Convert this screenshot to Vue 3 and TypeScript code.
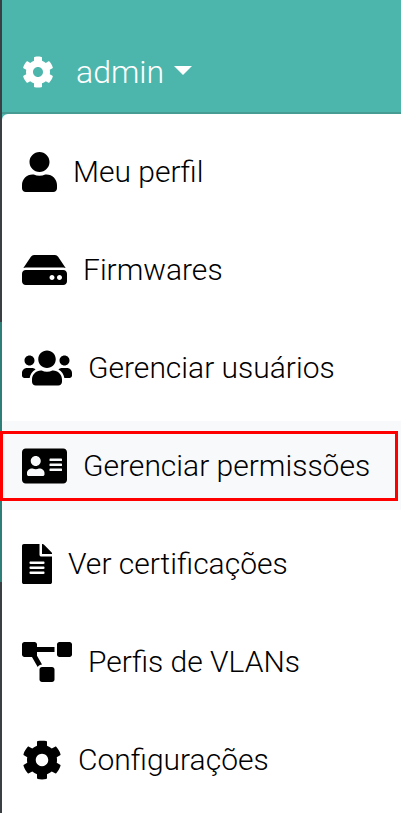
<template>
  <div class="page">
    <div class="edge">
      <span class="edge-dark edge-top"></span>
      <span class="edge-teal"></span>
      <span class="edge-dark edge-bottom"></span>
    </div>
    <div class="panel">
      <header class="navbar">
        <svg class="nav-gear" viewBox="0 0 512 512"><path :d="cogPath" /></svg>
        <span class="nav-user">admin</span>
        <span class="caret"></span>
      </header>
      <ul class="menu">
        <li
          v-for="item in items"
          :key="item.label"
          class="menu-item"
          :class="{ active: item.active }"
        >
          <svg class="menu-icon" :viewBox="item.box" :style="{ width: item.width + 'px' }"><path :d="item.path" /></svg>
          <span>{{ item.label }}</span>
          <i v-if="item.active" class="mark"></i>
        </li>
      </ul>
    </div>
  </div>
</template>

<script setup lang="ts">
  const cogPath =
    'M487.4 315.7l-42.6-24.6c4.3-23.2 4.3-47 0-70.2l42.6-24.6c4.9-2.8 7.1-8.6 5.5-14-11.1-35.6-30-67.8-54.7-94.6-3.8-4.1-10-5.1-14.8-2.3L380.8 110c-17.9-15.4-38.5-27.3-60.8-35.1V25.8c0-5.6-3.9-10.5-9.4-11.7-36.7-8.2-74.3-7.8-109.2 0-5.5 1.2-9.4 6.1-9.4 11.7V75c-22.2 7.9-42.8 19.8-60.8 35.1L88.7 85.5c-4.9-2.8-11-1.9-14.8 2.3-24.7 26.7-43.6 58.9-54.7 94.6-1.7 5.4.6 11.2 5.5 14L67.3 221c-4.3 23.2-4.3 47 0 70.2l-42.6 24.6c-4.9 2.8-7.1 8.6-5.5 14 11.1 35.6 30 67.8 54.7 94.6 3.8 4.1 10 5.1 14.8 2.3l42.6-24.6c17.9 15.4 38.5 27.3 60.8 35.1v49.2c0 5.6 3.9 10.5 9.4 11.7 36.7 8.2 74.3 7.8 109.2 0 5.5-1.2 9.4-6.1 9.4-11.7v-49.2c22.2-7.9 42.8-19.8 60.8-35.1l42.6 24.6c4.9 2.8 11 1.9 14.8-2.3 24.7-26.7 43.6-58.9 54.7-94.6 1.5-5.5-.7-11.3-5.6-14.1zM256 336c-44.1 0-80-35.9-80-80s35.9-80 80-80 80 35.9 80 80-35.9 80-80 80z'

  const items = [
    {
      label: 'Meu perfil',
      box: '0 0 448 512',
      width: 35,
      path: 'M224 256c70.7 0 128-57.3 128-128S294.7 0 224 0 96 57.3 96 128s57.3 128 128 128zm89.6 32h-16.7c-22.2 10.2-46.9 16-72.9 16s-50.6-5.8-72.9-16h-16.7C60.2 288 0 348.2 0 422.4V464c0 26.5 21.5 48 48 48h352c26.5 0 48-21.5 48-48v-41.6c0-74.2-60.2-134.4-134.4-134.4z',
    },
    {
      label: 'Firmwares',
      box: '0 0 576 512',
      width: 45,
      path: 'M576 304v96c0 26.51-21.49 48-48 48H48c-26.51 0-48-21.49-48-48v-96c0-26.51 21.49-48 48-48h480c26.51 0 48 21.49 48 48zm-48-80a79.557 79.557 0 0 1 30.777 6.165L462.25 85.374A48.003 48.003 0 0 0 422.311 64H153.689a48 48 0 0 0-39.938 21.374L17.223 230.165A79.557 79.557 0 0 1 48 224h480zm-48 96c-17.673 0-32 14.327-32 32s14.327 32 32 32 32-14.327 32-32-14.327-32-32-32zm-96 0c-17.673 0-32 14.327-32 32s14.327 32 32 32 32-14.327 32-32-14.327-32-32-32z',
    },
    {
      label: 'Gerenciar usuários',
      box: '0 0 640 512',
      width: 50,
      path: 'M96 224c35.3 0 64-28.7 64-64s-28.7-64-64-64-64 28.7-64 64 28.7 64 64 64zm448 0c35.3 0 64-28.7 64-64s-28.7-64-64-64-64 28.7-64 64 28.7 64 64 64zm32 32h-64c-17.6 0-33.5 7.1-45.1 18.6 40.3 22.1 68.9 62 75.1 109.4h66c17.7 0 32-14.3 32-32v-32c0-35.3-28.7-64-64-64zm-256 0c61.9 0 112-50.1 112-112S381.9 32 320 32 208 82.1 208 144s50.1 112 112 112zm76.8 32h-8.3c-20.8 10-43.9 16-68.5 16s-47.6-6-68.5-16h-8.3C179.6 288 128 339.6 128 403.2V432c0 26.5 21.5 48 48 48h288c26.5 0 48-21.5 48-48v-28.8c0-63.6-51.6-115.2-115.2-115.2zm-223.7-13.4C161.5 263.1 145.6 256 128 256H64c-35.3 0-64 28.7-64 64v32c0 17.7 14.3 32 32 32h65.9c6.3-47.4 34.9-87.3 75.2-109.4z',
    },
    {
      label: 'Gerenciar permissões',
      box: '0 0 576 512',
      width: 45,
      active: true,
      path: 'M528 32H48C21.5 32 0 53.5 0 80v352c0 26.5 21.5 48 48 48h480c26.5 0 48-21.5 48-48V80c0-26.5-21.5-48-48-48zm-352 96c35.3 0 64 28.7 64 64s-28.7 64-64 64-64-28.7-64-64 28.7-64 64-64zm112 236.8c0 10.6-10 19.2-22.4 19.2H86.4C74 384 64 375.4 64 364.8v-19.2c0-31.8 30.1-57.6 67.2-57.6h5c12.3 5.1 25.7 8 39.8 8s27.6-2.9 39.8-8h5c37.1 0 67.2 25.8 67.2 57.6v19.2zM512 312c0 4.4-3.6 8-8 8H360c-4.4 0-8-3.6-8-8v-16c0-4.4 3.6-8 8-8h144c4.4 0 8 3.6 8 8v16zm0-64c0 4.4-3.6 8-8 8H360c-4.4 0-8-3.6-8-8v-16c0-4.4 3.6-8 8-8h144c4.4 0 8 3.6 8 8v16zm0-64c0 4.4-3.6 8-8 8H360c-4.4 0-8-3.6-8-8v-16c0-4.4 3.6-8 8-8h144c4.4 0 8 3.6 8 8v16z',
    },
    {
      label: 'Ver certificações',
      box: '0 0 384 512',
      width: 30,
      path: 'M224 136V0H24C10.7 0 0 10.7 0 24v464c0 13.3 10.7 24 24 24h336c13.3 0 24-10.7 24-24V160H248c-13.2 0-24-10.8-24-24zm64 236c0 6.6-5.4 12-12 12H108c-6.6 0-12-5.4-12-12v-8c0-6.6 5.4-12 12-12h168c6.6 0 12 5.4 12 12v8zm0-64c0 6.6-5.4 12-12 12H108c-6.6 0-12-5.4-12-12v-8c0-6.6 5.4-12 12-12h168c6.6 0 12 5.4 12 12v8zm0-72v8c0 6.6-5.4 12-12 12H108c-6.6 0-12-5.4-12-12v-8c0-6.6 5.4-12 12-12h168c6.6 0 12 5.4 12 12zm96-114.1v6.1H256V0h6.1c6.4 0 12.5 2.5 17 7l97.9 98c4.5 4.5 7 10.6 7 16.9z',
    },
    {
      label: 'Perfis de VLANs',
      box: '0 0 640 512',
      width: 50,
      path: 'M384 320H256c-17.67 0-32 14.33-32 32v128c0 17.67 14.33 32 32 32h128c17.67 0 32-14.33 32-32V352c0-17.67-14.33-32-32-32zM192 32c0-17.67-14.33-32-32-32H32C14.33 0 0 14.33 0 32v128c0 17.67 14.33 32 32 32h95.72l73.16 128.04C211.98 300.98 232.4 288 256 288h.28L192 175.51V128h224V64H192V32zM608 0H480c-17.67 0-32 14.33-32 32v128c0 17.67 14.33 32 32 32h128c17.67 0 32-14.33 32-32V32c0-17.67-14.33-32-32-32z',
    },
    {
      label: 'Configurações',
      box: '0 0 512 512',
      width: 40,
      path: cogPath,
    },
  ]
</script>

<style>
  html,
  body {
    margin: 0;
    background: #fff;
    overflow: hidden;
  }
</style>

<style scoped>
  .page {
    display: flex;
    height: 813px;
    font-family: Roboto, 'Liberation Sans', sans-serif;
    overflow: hidden;
  }

  .edge {
    display: flex;
    flex-direction: column;
    flex: 0 0 2px;
  }

  .edge-dark {
    background: #3a3f44;
  }

  .edge-top {
    height: 322px;
  }

  .edge-teal {
    height: 260px;
    background: #2f7f78;
  }

  .edge-bottom {
    flex: 1;
  }

  .panel {
    flex: 1;
    min-width: 0;
    background: #4db6ac;
  }

  .navbar {
    display: flex;
    align-items: center;
    box-sizing: border-box;
    height: 114px;
    padding: 32px 0 0 20px;
    color: #fff;
    border-bottom: 2px solid #469c93;
  }

  .nav-gear {
    width: 32px;
    height: 32px;
    fill: #fff;
  }

  .nav-user {
    margin-left: 22px;
    font-size: 32px;
    font-weight: 300;
  }

  .caret {
    margin-left: 10px;
    border-top: 9px solid #fff;
    border-left: 9px solid transparent;
    border-right: 9px solid transparent;
    transform: translateY(-2px);
  }

  .menu {
    display: flex;
    flex-direction: column;
    gap: 9px;
    height: 699px;
    margin: 0;
    padding: 13px 0 0;
    box-sizing: border-box;
    list-style: none;
    background: #fff;
    border-radius: 6px 0 0 0;
  }

  .menu-item {
    position: relative;
    display: flex;
    align-items: center;
    gap: 16px;
    height: 89px;
    padding-left: 20px;
    color: #000;
    font-size: 30px;
    font-weight: 300;
  }

  .menu-item.active {
    background: #f8f9fa;
  }

  .menu-icon {
    height: 40px;
    flex-shrink: 0;
    fill: #000;
  }

  .mark {
    position: absolute;
    left: -2px;
    top: 10px;
    width: 398px;
    height: 70px;
    box-sizing: border-box;
    border: 3px solid #f00;
  }
</style>
